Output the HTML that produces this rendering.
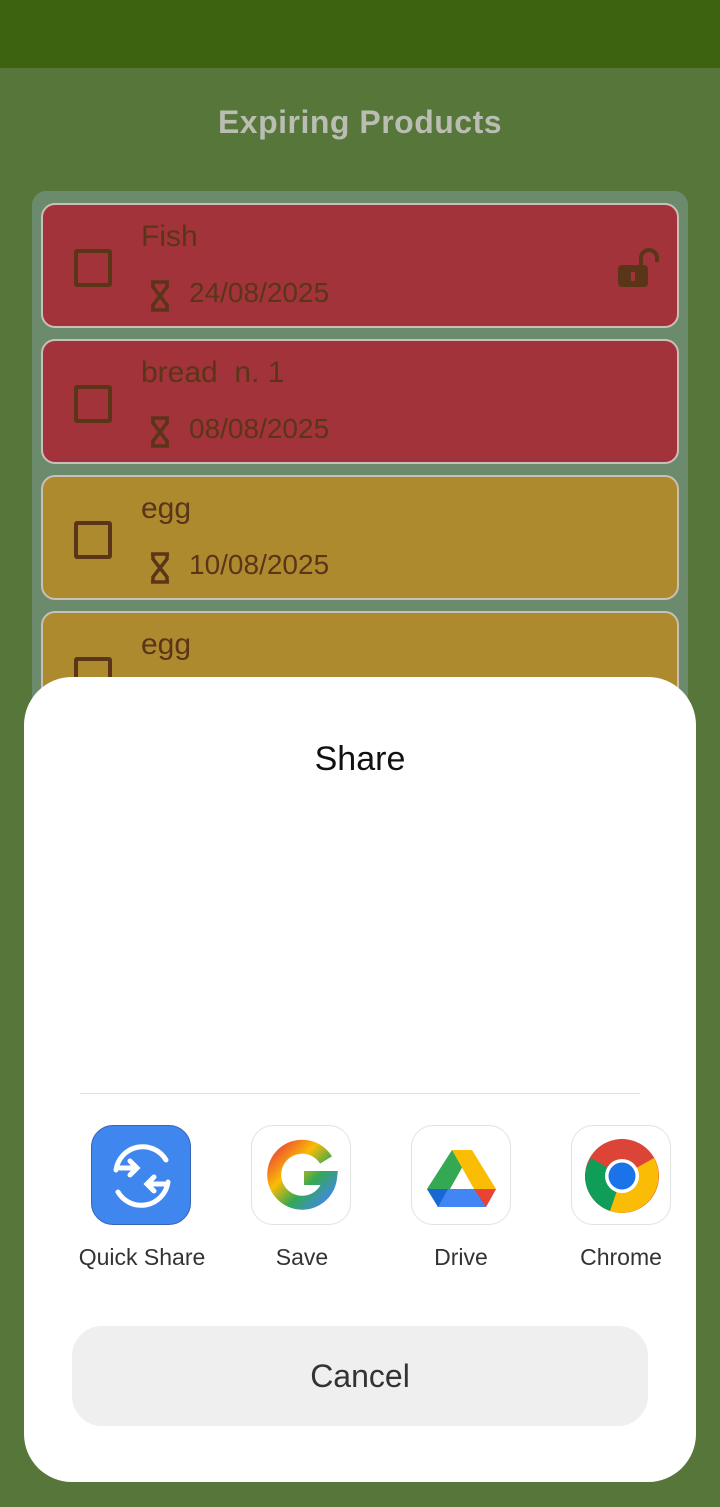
<!DOCTYPE html>
<html><head><meta charset="utf-8"><style>
*{margin:0;padding:0;box-sizing:border-box}
body{width:720px;height:1507px;background:#57763a;font-family:"Liberation Sans",sans-serif;position:relative;overflow:hidden}
.top{position:absolute;left:0;top:0;width:720px;height:68px;background:#3d6310}
.title{position:absolute;top:104px;width:720px;text-align:center;font-size:32px;font-weight:bold;color:#b9bdb2;letter-spacing:0.5px}
.list{position:absolute;left:32px;top:191px;width:656px;height:700px;background:#6c8a6c;border-radius:14px}
.card{position:absolute;left:41px;width:638px;height:125px;border:2px solid #c8c0b8;border-radius:14px}
.red{background:#a3333a}.yel{background:#ae8a2f}
.cb{position:absolute;left:31px;top:44px;width:38px;height:38px;border:4px solid #5a3518;border-radius:3px}
.name{position:absolute;left:98px;top:15px;font-size:30px;color:#5a3518}
.date{position:absolute;left:146px;top:72px;font-size:28px;color:#5a3518}
.hg{position:absolute;left:105px;top:74px}
.sheet{position:absolute;left:24px;top:677px;width:672px;height:805px;background:#fff;border-radius:48px}
.share{position:absolute;top:740px;width:720px;text-align:center;font-size:34px;color:#111}
.line{position:absolute;left:80px;top:1093px;width:560px;height:1px;background:#e2e2e2}
.ic{position:absolute;top:1125px;width:100px;height:100px;border-radius:22px;border:1px solid #e2e2e2;background:#fff}
.lab{position:absolute;top:1244px;width:160px;text-align:center;font-size:23px;color:#333}
.cancel{position:absolute;left:72px;top:1326px;width:576px;height:100px;background:#efefef;border-radius:30px;text-align:center;line-height:100px;font-size:32px;color:#333}
</style></head><body>
<div class="top"></div>
<div class="title">Expiring Products</div>
<div class="list"></div>
<div class="card red" style="top:203px"><div class="cb"></div><div class="name">Fish</div>
<svg class="hg" width="24" height="34" viewBox="0 0 24 34"><path d="M3 3H21M3 31H21M5 3V8L19 26V31M19 3V8L5 26V31" stroke="#5a3518" stroke-width="3.5" fill="none"/></svg>
<div class="date">24/08/2025</div>
<svg style="position:absolute;left:574px;top:42px" width="42" height="42" viewBox="0 0 42 42"><path d="M24 18V11a8 8 0 0 1 16 0v4" stroke="#5a3518" stroke-width="4" fill="none"/><rect x="1" y="18" width="30" height="22" rx="4" fill="#5a3518"/><rect x="14" y="25" width="4" height="9" fill="#a3333a"/></svg></div>
<div class="card red" style="top:339px"><div class="cb"></div><div class="name">bread&nbsp; n. 1</div>
<svg class="hg" width="24" height="34" viewBox="0 0 24 34"><path d="M3 3H21M3 31H21M5 3V8L19 26V31M19 3V8L5 26V31" stroke="#5a3518" stroke-width="3.5" fill="none"/></svg>
<div class="date">08/08/2025</div></div>
<div class="card yel" style="top:475px"><div class="cb"></div><div class="name">egg</div>
<svg class="hg" width="24" height="34" viewBox="0 0 24 34"><path d="M3 3H21M3 31H21M5 3V8L19 26V31M19 3V8L5 26V31" stroke="#5a3518" stroke-width="3.5" fill="none"/></svg>
<div class="date">10/08/2025</div></div>
<div class="card yel" style="top:611px"><div class="cb"></div><div class="name">egg</div></div>
<div class="sheet"></div>
<div class="share">Share</div>
<div class="line"></div>
<div class="ic" style="left:91px;background:#3f86ef;border-color:#3564b8">
<svg width="100" height="100" viewBox="0 0 100 100"><g stroke="#fff" stroke-width="5" fill="none" stroke-linecap="round"><path d="M24 44a27 27 0 0 1 50-10"/><path d="M76 56a27 27 0 0 1-50 10"/><path d="M28 42H44M38 35l7 7-7 7"/><path d="M72 58H56M62 51l-7 7 7 7"/></g></svg></div>
<div class="ic" style="left:251px"><svg width="100" height="100" viewBox="0 0 100 100"><path d="M74 34A28 28 0 1 0 78 52H52" stroke="url(#g)" stroke-width="14" fill="none"/><defs><linearGradient id="g" x1="0" y1="0" x2="1" y2="1"><stop offset="0" stop-color="#ea4335"/><stop offset=".35" stop-color="#fbbc05"/><stop offset=".65" stop-color="#34a853"/><stop offset="1" stop-color="#4285f4"/></linearGradient></defs></svg></div>
<div class="ic" style="left:411px"><svg width="100" height="100" viewBox="0 0 100 100"><path d="M40 24H60L38 63H15z" fill="#34a853"/><path d="M40 24H60L84 63H62z" fill="#fbbc04"/><path d="M15 63H84L74 81H26z" fill="#4285f4"/><path d="M74 81L84 63H62z" fill="#ea4335"/><path d="M15 63L26 81L36 63z" fill="#1967d2"/></svg></div>
<div class="ic" style="left:571px"><svg width="100" height="100" viewBox="0 0 100 100"><circle cx="50" cy="50" r="37" fill="#db4437"/><path d="M50 50L13 50A37 37 0 0 0 38 85z" fill="#0f9d58"/><path d="M50 50L82 32A37 37 0 0 1 38 85z" fill="#fbbc05"/><path d="M50 50L19 32A37 37 0 0 0 13 50z" fill="#0f9d58"/><circle cx="50" cy="50" r="17" fill="#fff"/><circle cx="50" cy="50" r="13.5" fill="#1a73e8"/></svg></div>
<div class="lab" style="left:62px">Quick Share</div>
<div class="lab" style="left:222px">Save</div>
<div class="lab" style="left:381px">Drive</div>
<div class="lab" style="left:541px">Chrome</div>
<div class="cancel">Cancel</div>
</body></html>
